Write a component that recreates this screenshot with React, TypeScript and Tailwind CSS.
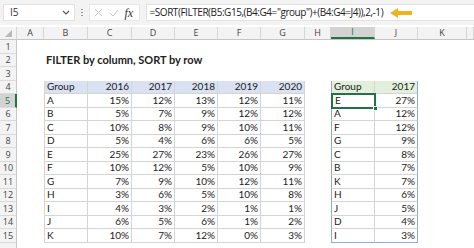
import React from 'react';

const COLS = ['', 'A', 'B', 'C', 'D', 'E', 'F', 'G', 'H', 'I', 'J', 'K', ''];
const WIDTHS = ['w-[17px]', 'w-[27px]', 'w-[44px]', 'w-[44px]', 'w-[43px]', 'w-[43px]', 'w-[43px]', 'w-[44px]', 'w-[26px]', 'w-[44px]', 'w-[43px]', 'w-[49px]', 'w-[7px]'];

const DATA: [string, string, string, string, string, string][] = [
  ['A', '15%', '12%', '13%', '12%', '11%'],
  ['B', '5%', '7%', '9%', '12%', '12%'],
  ['C', '10%', '8%', '9%', '10%', '11%'],
  ['D', '5%', '4%', '6%', '6%', '5%'],
  ['E', '25%', '27%', '23%', '26%', '27%'],
  ['F', '10%', '12%', '5%', '10%', '9%'],
  ['G', '7%', '9%', '10%', '12%', '11%'],
  ['H', '3%', '6%', '5%', '10%', '8%'],
  ['I', '4%', '3%', '2%', '1%', '1%'],
  ['J', '6%', '5%', '6%', '1%', '2%'],
  ['K', '10%', '7%', '12%', '0%', '3%'],
];

const SORTED: [string, string][] = [
  ['E', '27%'], ['A', '12%'], ['F', '12%'], ['G', '9%'], ['C', '8%'], ['B', '7%'],
  ['K', '7%'], ['H', '6%'], ['J', '5%'], ['D', '4%'], ['I', '3%'],
];

const cellFont = "font-['Lato',sans-serif] text-[10px] text-[#222]";

function Cell({ col, className = '', children }: { col: number; className?: string; children?: React.ReactNode }) {
  return (
    <div className={`${WIDTHS[col]} shrink-0 h-full flex items-center overflow-hidden whitespace-nowrap ${className}`}>
      {children}
    </div>
  );
}

// one sheet row: row-number header + cells
function Row({ n, label = true, children }: { n: number; label?: boolean; children?: React.ReactNode }) {
  const active = n === 5;
  return (
    <div className="flex h-[13.5px]">
      <div
        className={`w-[17px] shrink-0 h-full flex items-center justify-center border-b border-[#dadada] font-['Open_Sans',sans-serif] text-[9px] ${
          active ? 'bg-[#d3d3d3] text-[#217346] border-r-2 border-r-[#217346]' : 'bg-[#f3f3f3] text-[#444] border-r border-r-[#c8c8c8]'
        }`}
      >
        {label ? n : null}
      </div>
      {children}
    </div>
  );
}

function Arrow() {
  return (
    <svg width="22" height="10" viewBox="0 0 22 10">
      <path d="M0 5 L8 0 L8 3 L22 3 L22 7 L8 7 L8 10 Z" fill="#f2b21b" />
    </svg>
  );
}

export default function App() {
  return (
    <div className="w-[474px] h-[248px] overflow-hidden bg-white">
      {/* Formula bar */}
      <div className="h-[25px] bg-[#f3f3f3] flex items-center gap-[6px] pl-[3px]">
        <div className="w-[72px] h-[17px] bg-white border border-[#e2e2e2] flex items-center justify-between pl-[6px] pr-[4px] font-['Open_Sans',sans-serif] text-[10px] text-[#333]">
          <span>I5</span>
          <svg width="8" height="5" viewBox="0 0 8 5">
            <path d="M1 1 L4 4 L7 1" stroke="#555" strokeWidth="1.1" fill="none" />
          </svg>
        </div>
        <div className="flex flex-col gap-[1.5px]">
          <span className="w-[1.5px] h-[1.5px] bg-[#999]" />
          <span className="w-[1.5px] h-[1.5px] bg-[#999]" />
          <span className="w-[1.5px] h-[1.5px] bg-[#999]" />
        </div>
        <div className="w-[51px] h-[17px] bg-white border border-[#e8e8e8] flex items-center gap-[6px] pl-[4px]">
          <svg width="9" height="9" viewBox="0 0 9 9">
            <path d="M1 1 L8 8 M8 1 L1 8" stroke="#c4c4c4" strokeWidth="1" />
          </svg>
          <svg width="10" height="8" viewBox="0 0 10 8">
            <path d="M1 4 L4 7 L9 1" stroke="#c4c4c4" strokeWidth="1" fill="none" />
          </svg>
          <span className="font-['Liberation_Serif',serif] italic text-[12px] text-[#333] leading-none">fx</span>
        </div>
        <div className="flex-1 h-[17px] bg-white border-y border-l border-[#e2e2e2] flex items-center pl-[3px] gap-[7px]">
          <span className="font-['Open_Sans',sans-serif] text-[10px] text-[#222] whitespace-nowrap tracking-[-0.45px]">
            =SORT(FILTER(B5:G15,(B4:G4="group")+(B4:G4=J4)),2,-1)
          </span>
          <Arrow />
        </div>
      </div>
      <div className="h-[2px] bg-white" />

      {/* Column headers */}
      <div className="flex h-[13px] bg-[#f3f3f3] border-b border-[#c6c6c6]">
        {COLS.map((c, i) => (
          <div
            key={i}
            className={`${WIDTHS[i]} shrink-0 h-full flex items-center justify-center font-['Open_Sans',sans-serif] text-[9px] border-r border-[#d6d6d6] ${
              c === 'I' ? 'bg-[#d3d3d3] text-[#217346] border-b-2 border-b-[#217346]' : 'text-[#444]'
            }`}
          >
            {i === 0 ? (
              <svg width="7" height="7" viewBox="0 0 7 7">
                <path d="M7 0 L7 7 L0 7 Z" fill="#b8b8b8" />
              </svg>
            ) : (
              c
            )}
          </div>
        ))}
      </div>

      {/* Sheet body */}
      <div className={cellFont}>
        <Row n={1} />
        <Row n={2}>
          <Cell col={1} />
          <Cell col={2} className="overflow-visible pl-[2px] font-bold text-[11px]">
            FILTER by column, SORT by row
          </Cell>
        </Row>
        <Row n={3} />
        <Row n={4}>
          <Cell col={1} />
          <Cell col={2} className="bg-[#d9e1f2] border-x border-[#d4d4d4] border-b pl-[2px]">Group</Cell>
          {['2016', '2017', '2018', '2019', '2020'].map((y, k) => (
            <Cell key={y} col={3 + k} className="bg-[#d9e1f2] border-r border-b border-[#d4d4d4] justify-end pr-[2px]">
              {y}
            </Cell>
          ))}
          <Cell col={8} />
          <Cell col={9} className="bg-[#e2efda] border-l border-l-[#8ea9db] border-r border-r-[#d4d4d4] border-b border-b-[#d4d4d4] pl-[2px]">Group</Cell>
          <Cell col={10} className="bg-[#e2efda] border-r border-r-[#8ea9db] border-b border-b-[#d4d4d4] justify-end pr-[2px]">2017</Cell>
        </Row>
        {DATA.map((r, i) => {
          const last = i === DATA.length - 1;
          const s = SORTED[i];
          return (
            <Row key={i} n={5 + i}>
              <Cell col={1} />
              <Cell col={2} className="border-x border-b border-[#d4d4d4] pl-[2px]">{r[0]}</Cell>
              {r.slice(1).map((v, k) => (
                <Cell key={k} col={3 + k} className="border-r border-b border-[#d4d4d4] justify-end pr-[2px]">
                  {v}
                </Cell>
              ))}
              <Cell col={8} />
              {i === 0 ? (
                <div className="w-[44px] shrink-0 h-full relative border-l border-[#8ea9db]">
                  <div className="absolute inset-[-1px] border-2 border-[#217346] flex items-center pl-[2px]">E</div>
                  <div className="absolute right-[-3px] bottom-[-3px] w-[5px] h-[5px] bg-[#217346] border border-white z-10" />
                </div>
              ) : (
                <Cell
                  col={9}
                  className={`border-l border-l-[#8ea9db] border-r border-r-[#d4d4d4] pl-[2px] ${last ? 'border-b border-b-[#8ea9db]' : 'border-b border-b-[#d4d4d4]'}`}
                >
                  {s[0]}
                </Cell>
              )}
              <Cell
                col={10}
                className={`border-r border-r-[#8ea9db] justify-end pr-[2px] ${last ? 'border-b border-b-[#8ea9db]' : 'border-b border-b-[#d4d4d4]'}`}
              >
                {s[1]}
              </Cell>
            </Row>
          );
        })}
        <Row n={16} label={false} />
      </div>
    </div>
  );
}
